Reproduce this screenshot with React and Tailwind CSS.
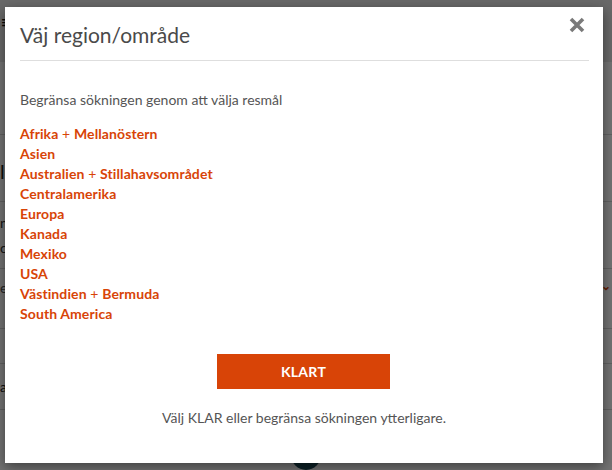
import React from 'react';

const REGIONS = [
  ['Afrika', 'Mellanöstern'],
  ['Asien'],
  ['Australien', 'Stillahavsområdet'],
  ['Centralamerika'],
  ['Europa'],
  ['Kanada'],
  ['Mexiko'],
  ['USA'],
  ['Västindien', 'Bermuda'],
  ['South America'],
];

function BackgroundPage() {
  // the search page sitting behind the dimmed overlay
  return (
    <div className="flex flex-col w-full h-full bg-white">
      <div className="h-[65px] bg-[#e8e8e8] flex items-start px-[1px] pt-[10px] text-[#111] text-[16px] font-bold">≡</div>
      <div className="h-[77px] border-b border-[#d8d8d8]" />
      <div className="h-[70px] border-b border-[#d8d8d8] flex items-center pt-[6px] text-[#222] text-[20px]">le</div>
      <div className="h-[70px] border-b border-[#d8d8d8] flex flex-col justify-between py-[10px] text-[#333] text-[14px]">
        <span>ng</span>
        <span>ca</span>
      </div>
      <div className="h-[63px] border-b border-[#d8d8d8] flex items-start justify-between pt-[8px] text-[#555] text-[14px]">
        <span>e</span>
        <span className="text-[#d84407] text-[12px] font-bold pr-[1px]">⌄</span>
      </div>
      <div className="h-[37px] border-b border-[#d8d8d8]" />
      <div className="h-[48px] border-b border-[#d8d8d8] flex items-center text-[#222] text-[14px]">a</div>
      <div className="flex justify-center mt-[30px]">
        <div className="w-[30px] h-[30px] rounded-full bg-[#1d4d57]" />
      </div>
    </div>
  );
}

function CloseIcon() {
  return (
    <svg width="16" height="16" viewBox="0 0 16 16">
      <path d="M2 2 L14 14 M14 2 L2 14" stroke="#7a7a7a" strokeWidth="3.6" strokeLinecap="butt" />
    </svg>
  );
}

export default function App() {
  return (
    <div className="relative w-[612px] h-[470px] overflow-hidden" style={{ fontFamily: 'Lato, "Open Sans", sans-serif' }}>
      <BackgroundPage />
      <div className="absolute inset-0 bg-black/55" />

      {/* Modal */}
      <div className="absolute left-[5px] top-[7px] w-[598px] h-[456px] bg-white shadow-[0_4px_12px_rgba(0,0,0,0.45)] flex flex-col px-[15px]">
        <button className="absolute right-[18px] top-[10px] p-0">
          <CloseIcon />
        </button>

        <h2 className="pt-[15px] pb-[13px] text-[21px] leading-[25px] text-[#4a4a4a] font-normal border-b border-[#dedede] mr-[-1px]">
          Väj region/område
        </h2>

        <p className="mt-[30px] text-[14px] leading-[18px] text-[#555]">Begränsa sökningen genom att välja resmål</p>

        <ul className="mt-[15px] flex flex-col">
          {REGIONS.map((r) => (
            <li key={r[0]} className="text-[14px] leading-[20px] text-[#d84407] font-bold tracking-[0.1px]">
              {r[0]}
              {r[1] && (
                <>
                  <span className="font-normal"> + </span>
                  {r[1]}
                </>
              )}
            </li>
          ))}
        </ul>

        <div className="flex justify-center mt-[30px] pr-[1px]">
          <button className="w-[173px] h-[35px] bg-[#d84407] text-white text-[14px] font-bold tracking-[0.3px]">KLART</button>
        </div>

        <p className="mt-[20px] text-center text-[14px] leading-[18px] text-[#555]">
          Välj KLAR eller begränsa sökningen ytterligare.
        </p>
      </div>
    </div>
  );
}
